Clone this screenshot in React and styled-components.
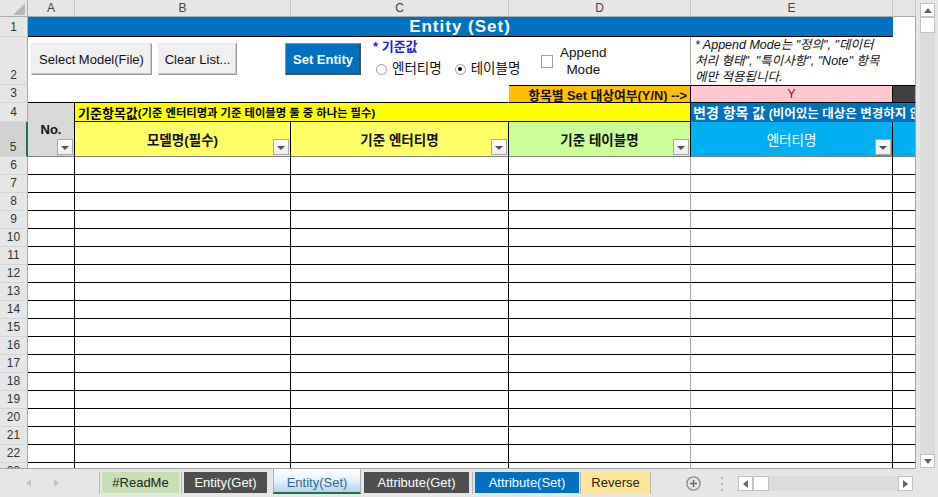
import React from 'react';
import styled, { createGlobalStyle } from 'styled-components';

const SANS = `"Liberation Sans", "Noto Sans CJK KR", sans-serif`;

const Global = createGlobalStyle`
  html, body { margin: 0; padding: 0; background: #e6e6e6; }
  *, *::before, *::after { box-sizing: border-box; }
`;

const Window = styled.div`
  width: 938px;
  height: 497px;
  overflow: hidden;
  display: flex;
  flex-direction: column;
  background: #e6e6e6;
  font-family: ${SANS};
  color: #000;
`;

const Main = styled.div`
  display: flex;
  height: 469px;
`;

const Sheet = styled.div`
  display: grid;
  grid-template-columns: 28px 47px 216px 218px 182px 202px 23px;
  grid-template-rows: 17px 20px 48px 18px 19px 35px repeat(18, 18px);
  width: 916px;
  height: 469px;
  overflow: hidden;
  background: #fff;
  border-bottom: 1px solid #a6a6a6;
`;

const CellBase = styled.div`
  grid-column: ${p => p.$col} / span ${p => p.$cs || 1};
  grid-row: ${p => p.$row} / span ${p => p.$rs || 1};
  background: ${p => p.$bg || '#fff'};
  border-right: 1px solid ${p => p.$r || 'transparent'};
  border-bottom: 1px solid ${p => p.$b || 'transparent'};
  border-top: ${p => (p.$t ? `1px solid ${p.$t}` : 'none')};
  position: relative;
  display: flex;
  align-items: center;
  justify-content: center;
  overflow: hidden;
  min-width: 0;
  white-space: nowrap;
`;

const Corner = styled(CellBase)`
  background: #e6e6e6;
  border-right: 1px solid #ababab;
  border-bottom: 1px solid #ababab;
  align-items: flex-end;
  justify-content: flex-end;
  padding: 0 2px 1px 0;
`;

const ColHeader = styled(CellBase)`
  background: #e6e6e6;
  border-right: 1px solid #c6c6c6;
  border-bottom: 1px solid #ababab;
  font-size: 12px;
  color: #444;
`;

const RowHeader = styled(CellBase)`
  grid-column: 1 / span 1;
  background: ${p => (p.$sel ? '#d2d2d2' : '#e6e6e6')};
  border-right: ${p => (p.$sel ? '2px solid #217346' : '1px solid #ababab')};
  border-bottom: 1px solid #d4d4d4;
  font-size: 12px;
  line-height: 17px;
  color: #333;
  align-items: flex-end;
`;

const TitleCell = styled(CellBase)`
  background: #0070c0;
  border-bottom: 1px solid #000;
  color: #fff;
  font-weight: bold;
  font-size: 17px;
  letter-spacing: 1px;
`;

const ControlCell = styled(CellBase)`
  align-items: flex-start;
  justify-content: flex-start;
  padding-left: 3px;
  white-space: normal;
`;

const NoteCell = styled(CellBase)`
  align-items: flex-start;
  justify-content: flex-start;
  padding-left: 4px;
  font-size: 12.5px;
  line-height: 16px;
  font-style: italic;
  white-space: nowrap;
  color: #111;
`;

const FlagLabel = styled(CellBase)`
  background: #ffc000;
  justify-content: flex-end;
  padding-right: 3px;
  font-size: 12.8px;
  font-weight: bold;
  color: #111;
`;

const FlagValue = styled(CellBase)`
  background: #ffc7ce;
  color: #9c0006;
  font-size: 12px;
`;

const GroupCell = styled(CellBase)`
  justify-content: flex-start;
  padding-left: ${p => p.$pl || 3}px;
  font-weight: bold;
  font-size: ${p => p.$fs || 13}px;
  color: ${p => p.$fg || '#000'};
`;

const GroupNote = styled.span`
  font-size: ${p => p.$fs || 12}px;
  font-weight: bold;
`;

const FieldHeader = styled(CellBase)`
  font-size: 13.5px;
  font-weight: ${p => (p.$light ? 'normal' : 'bold')};
  color: ${p => p.$fg || '#111'};
`;

const NoHeader = styled(CellBase)`
  background: #d9d9d9;
  font-size: 13px;
  font-weight: bold;
  color: #111;
`;

const BodyCell = styled(CellBase)``;

const FilterButton = styled.div`
  position: absolute;
  right: 1px;
  bottom: 1px;
  width: 16px;
  height: 16px;
  background: linear-gradient(#ffffff, #eeeeee);
  border: 1px solid #a9a9a9;
  display: flex;
  align-items: center;
  justify-content: center;
  &::after {
    content: '';
    display: block;
    margin-top: 2px;
    border-left: 4px solid transparent;
    border-right: 4px solid transparent;
    border-top: 4px solid #555;
  }
`;

/* row 2 controls */
const FormButton = styled.div`
  margin-top: 6px;
  margin-right: ${p => p.$mr || 0}px;
  width: ${p => p.$w}px;
  height: 32px;
  flex: none;
  display: flex;
  align-items: center;
  justify-content: center;
  font-size: 13px;
  font-weight: ${p => (p.$primary ? 'bold' : 'normal')};
  color: ${p => (p.$primary ? '#fff' : '#111')};
  background: ${p => (p.$primary ? '#0070c0' : '#f0f0f0')};
  border: 1px solid;
  border-color: ${p => (p.$primary ? '#5b9bd5 #555 #555 #5b9bd5' : '#e8e8e8 #9a9a9a #9a9a9a #e8e8e8')};
  box-shadow: inset -1px -1px 0 ${p => (p.$primary ? '#0a5a98' : '#c9c9c9')};
`;

const BaseGroup = styled.div`
  margin-top: 2px;
  display: flex;
  flex-direction: column;
  gap: 6px;
  width: 155px;
  flex: none;
`;

const BaseLabel = styled.div`
  font-size: 13px;
  line-height: 16px;
  color: #1f1fdf;
  font-weight: bold;
`;

const RadioRow = styled.div`
  display: flex;
  align-items: center;
  padding-left: 3px;
  gap: 13px;
`;

const RadioItem = styled.div`
  display: flex;
  align-items: center;
  gap: 5px;
  font-size: 13.5px;
  line-height: 16px;
  color: #111;
`;

const RadioDot = styled.span`
  width: 11px;
  height: 11px;
  border-radius: 50%;
  border: 1px solid #9a9a9a;
  background: #fff;
  display: flex;
  align-items: center;
  justify-content: center;
  &::after {
    content: '';
    display: ${p => (p.$on ? 'block' : 'none')};
    width: 4px;
    height: 4px;
    border-radius: 50%;
    background: #000;
  }
`;

const CheckGroup = styled.div`
  margin-top: 7px;
  margin-left: 13px;
  display: flex;
  align-items: center;
  gap: 7px;
`;

const CheckBox = styled.span`
  width: 12px;
  height: 13px;
  border: 1px solid #a0a0a0;
  background: #fff;
  flex: none;
`;

const CheckLabel = styled.div`
  font-size: 13.5px;
  line-height: 17px;
  text-align: center;
  color: #111;
`;

/* scrollbars */
const VScroll = styled.div`
  width: 22px;
  height: 469px;
  background: #e6e6e6;
  display: flex;
  flex-direction: column;
  padding: 3px 3px 1px 4px;
`;

const ScrollBtn = styled.div`
  flex: none;
  width: ${p => p.$w || 15}px;
  height: ${p => p.$h || 14}px;
  background: #fff;
  border: 1px solid #c2c2c2;
  display: flex;
  align-items: center;
  justify-content: center;
`;

const VTrack = styled.div`
  flex: 1;
  background: #dcdcdc;
`;

const TabBar = styled.div`
  height: 28px;
  display: flex;
  align-items: flex-start;
  background: #e6e6e6;
`;

const TabNav = styled.div`
  width: 100px;
  height: 22px;
  margin-top: 3px;
  display: flex;
  align-items: center;
  padding-left: 26px;
  gap: 23px;
  border-right: 1px solid #b5b5b5;
  flex: none;
`;

const Tab = styled.div`
  flex: none;
  width: ${p => p.$w}px;
  height: ${p => (p.$active ? 25 : 21)}px;
  margin-top: ${p => (p.$active ? 0 : 3)}px;
  display: flex;
  align-items: center;
  justify-content: center;
  padding-top: ${p => (p.$active ? 3 : 0)}px;
  font-size: 13px;
  color: ${p => p.$fg};
  background: ${p => p.$bg};
  border-left: ${p => (p.$active ? '1px solid #b0b0b0' : 'none')};
  border-right: ${p => (p.$active ? '1px solid #b0b0b0' : 'none')};
  border-bottom: ${p => (p.$active ? '2px solid #217346' : 'none')};
`;

const TabGap = styled.div`
  flex: none;
  width: ${p => p.$w}px;
  height: 22px;
  margin-top: 3px;
  display: flex;
  justify-content: center;
  &::after {
    content: '';
    width: 1px;
    height: 100%;
    background: ${p => (p.$line ? '#b5b5b5' : 'transparent')};
  }
`;

const AddSheet = styled.div`
  margin-left: 34px;
  margin-top: 7px;
  width: 15px;
  height: 15px;
  flex: none;
`;

const Dots = styled.div`
  margin-left: 20px;
  margin-top: 8px;
  display: flex;
  flex-direction: column;
  gap: 4px;
  flex: none;
  & > span {
    width: 2px;
    height: 2px;
    background: #b5b5b5;
  }
`;

const HScroll = styled.div`
  margin-left: 15px;
  margin-top: 7px;
  width: 175px;
  height: 15px;
  display: flex;
  flex: none;
  background: #dcdcdc;
`;

const HTrack = styled.div`
  flex: 1;
`;

const Tri = ({ dir, color = '#666' }) => {
  const pts = {
    up: '0,5 4,0 8,5',
    down: '0,0 8,0 4,5',
    left: '5,0 5,8 0,4',
    right: '0,0 0,8 5,4',
  }[dir];
  const vertical = dir === 'up' || dir === 'down';
  return (
    <svg width={vertical ? 8 : 5} height={vertical ? 5 : 8} viewBox={vertical ? '0 0 8 5' : '0 0 5 8'}>
      <polygon points={pts} fill={color} />
    </svg>
  );
};

const cols = ['A', 'B', 'C', 'D', 'E', ''];
const bodyRows = Array.from({ length: 18 }, (_, i) => i + 6);
const BLACK = '#000';
const GREY = '#a6a6a6';

const tabs = [
  { label: '#ReadMe', w: 77, bg: '#c6e0b4', fg: '#222' },
  { gap: 5, line: true },
  { label: 'Entity(Get)', w: 83, bg: '#4f4f4f', fg: '#fff' },
  { gap: 6, line: false },
  { label: 'Entity(Set)', w: 88, bg: 'linear-gradient(#ffffff 0%, #eaf3fb 45%, #b3d3ee 100%)', fg: '#2b6a8f', active: true },
  { gap: 3, line: false },
  { label: 'Attribute(Get)', w: 105, bg: '#4f4f4f', fg: '#fff' },
  { gap: 6, line: true },
  { label: 'Attribute(Set)', w: 104, bg: '#0070c0', fg: '#fff' },
  { gap: 3, line: true },
  { label: 'Reverse', w: 67, bg: '#ffe699', fg: '#222' },
  { gap: 3, line: true },
];

export default function App() {
  return (
    <Window>
      <Global />
      <Main>
        <Sheet>
          {/* column headers */}
          <Corner $col={1} $row={1}>
            <svg width="12" height="12" viewBox="0 0 12 12">
              <polygon points="12,0 12,12 0,12" fill="#b9b9b9" />
            </svg>
          </Corner>
          {cols.map((c, i) => (
            <ColHeader key={i} $col={i + 2} $row={1}>{c}</ColHeader>
          ))}

          {/* row 1 */}
          <RowHeader $row={2}>1</RowHeader>
          <TitleCell $col={2} $cs={5} $row={2}>Entity (Set)</TitleCell>
          <CellBase $col={7} $row={2} $r={GREY} />

          {/* row 2 */}
          <RowHeader $row={3}>2</RowHeader>
          <ControlCell $col={2} $cs={4} $row={3} $r={GREY}>
            <FormButton $w={121} $mr={6}>Select Model(File)</FormButton>
            <FormButton $w={79} $mr={48}>Clear List...</FormButton>
            <FormButton $w={76} $mr={12} $primary>Set Entity</FormButton>
            <BaseGroup>
              <BaseLabel>* 기준값</BaseLabel>
              <RadioRow>
                <RadioItem><RadioDot />엔터티명</RadioItem>
                <RadioItem><RadioDot $on />테이블명</RadioItem>
              </RadioRow>
            </BaseGroup>
            <CheckGroup>
              <CheckBox />
              <CheckLabel>Append<br />Mode</CheckLabel>
            </CheckGroup>
          </ControlCell>
          <NoteCell $col={6} $row={3}>
            * Append Mode는 "정의", "데이터<br />
            처리 형태", "특이사항", "Note" 항목<br />
            에만 적용됩니다.
          </NoteCell>
          <CellBase $col={7} $row={3} $r={GREY} />

          {/* row 3 */}
          <RowHeader $row={4}>3</RowHeader>
          <CellBase $col={2} $cs={3} $row={4} $b={BLACK} />
          <FlagLabel $col={5} $row={4} $t={BLACK} $b={BLACK} $r={BLACK}>항목별 Set 대상여부(Y/N) --&gt;</FlagLabel>
          <FlagValue $col={6} $row={4} $t={BLACK} $b={BLACK} $r={BLACK}>Y</FlagValue>
          <CellBase $col={7} $row={4} $t={BLACK} $b={BLACK} $r={GREY} $bg="#404040" />

          {/* row 4 */}
          <RowHeader $row={5}>4</RowHeader>
          <NoHeader $col={2} $row={5} $rs={2} $r={BLACK} $b="#7f7f7f">
            No.
            <FilterButton />
          </NoHeader>
          <GroupCell $col={3} $cs={3} $row={5} $bg="#ffff00" $r={BLACK} $b={BLACK}>
            기준항목값<GroupNote $fs={11.3}>(기준 엔터티명과 기준 테이블명 둘 중 하나는 필수)</GroupNote>
          </GroupCell>
          <GroupCell $col={6} $cs={2} $row={5} $bg="#0070c0" $fg="#fff" $r={GREY} $fs={14} $pl={2}>
            변경 항목 값<GroupNote $fs={12.5}>&nbsp;(비어있는 대상은 변경하지 않음)</GroupNote>
          </GroupCell>

          {/* row 5 */}
          <RowHeader $row={6} $sel>5</RowHeader>
          <FieldHeader $col={3} $row={6} $bg="#ffff66" $r={BLACK} $b="#7f7f7f">
            모델명(필수)
            <FilterButton />
          </FieldHeader>
          <FieldHeader $col={4} $row={6} $bg="#ffff66" $r={BLACK} $b="#7f7f7f">
            기준 엔터티명
            <FilterButton />
          </FieldHeader>
          <FieldHeader $col={5} $row={6} $bg="#ccff99" $r={BLACK} $b="#7f7f7f">
            기준 테이블명
            <FilterButton />
          </FieldHeader>
          <FieldHeader $col={6} $row={6} $bg="#00b0f0" $fg="#fff" $light $r={BLACK} $b="#7f7f7f">
            엔터티명
            <FilterButton />
          </FieldHeader>
          <CellBase $col={7} $row={6} $bg="#00b0f0" $r={GREY} $b="#7f7f7f" />

          {/* body rows */}
          {bodyRows.map(r => (
            <React.Fragment key={r}>
              <RowHeader $row={r + 1}>{r}</RowHeader>
              <BodyCell $col={2} $row={r + 1} $r={BLACK} $b={BLACK} />
              <BodyCell $col={3} $row={r + 1} $r={BLACK} $b={BLACK} />
              <BodyCell $col={4} $row={r + 1} $r={BLACK} $b={BLACK} />
              <BodyCell $col={5} $row={r + 1} $r={GREY} $b={BLACK} />
              <BodyCell $col={6} $row={r + 1} $r={BLACK} $b={BLACK} />
              <BodyCell $col={7} $row={r + 1} $r={GREY} $b={BLACK} />
            </React.Fragment>
          ))}
        </Sheet>
        <VScroll>
          <ScrollBtn><Tri dir="up" /></ScrollBtn>
          <ScrollBtn $h={16} />
          <VTrack />
          <ScrollBtn><Tri dir="down" /></ScrollBtn>
        </VScroll>
      </Main>
      <TabBar>
        <TabNav>
          <Tri dir="left" color="#c4c4c4" />
          <Tri dir="right" color="#c4c4c4" />
        </TabNav>
        <TabGap $w={2} />
        {tabs.map((t, i) =>
          t.label ? (
            <Tab key={i} $w={t.w} $bg={t.bg} $fg={t.fg} $active={t.active}>{t.label}</Tab>
          ) : (
            <TabGap key={i} $w={t.gap} $line={t.line} />
          )
        )}
        <AddSheet>
          <svg width="15" height="15" viewBox="0 0 15 15">
            <circle cx="7.5" cy="7.5" r="6.6" fill="none" stroke="#8a8a8a" strokeWidth="1.3" />
            <path d="M7.5 4v7M4 7.5h7" stroke="#6a6a6a" strokeWidth="1.5" />
          </svg>
        </AddSheet>
        <Dots><span /><span /><span /></Dots>
        <HScroll>
          <ScrollBtn $w={15} $h={15}><Tri dir="left" /></ScrollBtn>
          <ScrollBtn $w={16} $h={15} />
          <HTrack />
          <ScrollBtn $w={15} $h={15}><Tri dir="right" /></ScrollBtn>
        </HScroll>
      </TabBar>
    </Window>
  );
}
